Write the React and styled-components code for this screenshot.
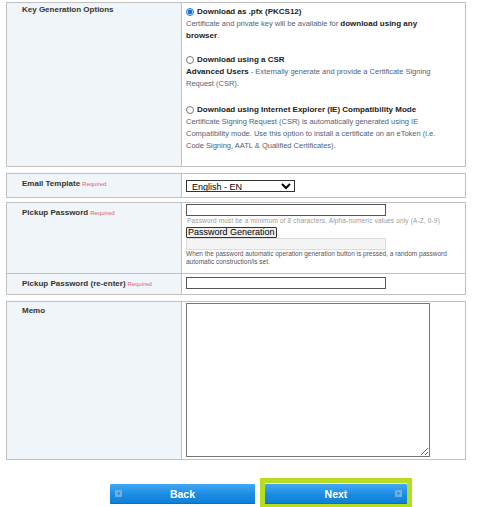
import React, { useState } from 'react'
import styled, { createGlobalStyle } from 'styled-components'

const GlobalStyle = createGlobalStyle`
    body {
        margin: 0;
        background: #fff;
        font-family: "Liberation Sans", Arial, sans-serif;
        color: #333;
    }
`

const Page = styled.div`
    width: 502px;
    height: 507px;
    overflow: hidden;
    padding: 2px 0 0 6px;
    box-sizing: border-box;
`

const Table = styled.div`
    width: 460px;
    box-sizing: border-box;
    border: 1px solid #c0c0c0;
    margin-bottom: ${props => props.gap ?? 6}px;
    display: grid;
    grid-template-columns: 175px 1fr;
`

const Label = styled.div`
    background: #eff5f8;
    border-right: 1px solid #c0c0c0;
    border-top: ${props => props.divider ? '1px solid #c0c0c0' : 'none'};
    padding: ${props => props.top ?? 4}px 0 0 15px;
    font-size: 8px;
    line-height: 9px;
    font-weight: bold;
    color: #333;
    height: ${props => props.h}px;
    box-sizing: border-box;
`

const Required = styled.span`
    font-size: 6px;
    font-weight: normal;
    color: #e0607a;
    margin-left: 2px;
`

const Value = styled.div`
    border-top: ${props => props.divider ? '1px solid #c0c0c0' : 'none'};
    padding: ${props => props.pad || '3px 0 0 4px'};
    box-sizing: border-box;
    height: ${props => props.h}px;
`

const Option = styled.div`
    max-width: 258px;
    margin-bottom: ${props => props.space ?? 12}px;
    font-size: 7.5px;
    line-height: 12px;
`

const OptionTitle = styled.label`
    display: flex;
    align-items: center;
    font-size: 8px;
    font-weight: bold;
    color: #222;
    input {
        width: 8px;
        height: 8px;
        margin: 0 3px 0 0;
        accent-color: #1a6fe0;
    }
`

const Desc = styled.div`
    color: #4f6378;
    b {
        color: #222;
        font-size: 8px;
    }
`

const Select = styled.select`
    width: 109px;
    height: 12px;
    font-family: "Liberation Sans", Arial, sans-serif;
    font-size: 9px;
    color: #000;
    border: 1px solid #333;
    border-radius: 0;
    padding: 0 0 0 1px;
    background: #fff;
    margin-top: 3px;
`

const TextInput = styled.input`
    display: block;
    width: 200px;
    height: 12px;
    box-sizing: border-box;
    border: 1px solid ${props => props.disabled ? '#dcdcdc' : '#555'};
    border-radius: 0;
    padding: 0;
    margin: 0;
    background: ${props => props.disabled ? '#f4f4f4' : '#fff'};
`

const Hint = styled.div`
    font-size: 6.5px;
    letter-spacing: 0.15px;
    color: #9a9a9a;
    line-height: 8px;
    margin: 1px 0 2px 1px;
    white-space: nowrap;
`

const GenButton = styled.button`
    display: block;
    font-family: "Liberation Sans", Arial, sans-serif;
    font-size: 9px;
    color: #000;
    background: #efefef;
    border: 1px solid #333;
    border-radius: 1px;
    padding: 0 1px;
    height: 11px;
    line-height: 9px;
`

const Note = styled.div`
    font-size: 6.5px;
    line-height: 8px;
    color: #555;
    max-width: 272px;
`

const Memo = styled.textarea`
    display: block;
    width: 244px;
    height: 154px;
    box-sizing: border-box;
    border: 1px solid #767676;
    border-radius: 0;
    margin: 0;
    resize: both;
`

const Buttons = styled.div`
    display: flex;
    align-items: flex-start;
    gap: 5px;
    padding: 18px 0 0 104px;
`

const Highlight = styled.div`
    border: 5px solid #b6dd1f;
    border-bottom-width: 4px;
    padding-top: 1px;
    background: #fff;
`

const NavButton = styled.button`
    position: relative;
    width: ${props => props.w}px;
    height: 20px;
    margin-top: ${props => props.offset || 0}px;
    border: none;
    border-radius: 1px;
    background: linear-gradient(#42a8f5, #1a8be0 55%, #0c7fd4);
    box-shadow: inset 0 -1px 0 #0a6fbc;
    color: #fff;
    font-family: "Liberation Sans", Arial, sans-serif;
    font-weight: bold;
    font-size: 10.5px;
    padding: 0;
    display: flex;
    align-items: center;
    justify-content: center;
`

const Arrow = styled.span`
    position: absolute;
    top: 6px;
    ${props => props.side}: 5px;
    width: 7px;
    height: 7px;
    background: #6bb3e6;
    border-radius: 1px;
    display: flex;
    align-items: center;
    justify-content: center;
`

const App = () => {
    const [mode, setMode] = useState('pfx')
    const [lang, setLang] = useState('en')

    return (
        <Page>
            <GlobalStyle />
            <Table gap={6}>
                <Label h={163} top={2}>Key Generation Options</Label>
                <Value h={163} pad="3px 0 0 4px">
                    <Option>
                        <OptionTitle>
                            <input type="radio" name="mode" checked={mode === 'pfx'} onChange={() => setMode('pfx')} />
                            Download as .pfx (PKCS12)
                        </OptionTitle>
                        <Desc>Certificate and private key will be available for <b>download using any browser</b>.</Desc>
                    </Option>
                    <Option space={14}>
                        <OptionTitle>
                            <input type="radio" name="mode" checked={mode === 'csr'} onChange={() => setMode('csr')} />
                            Download using a CSR
                        </OptionTitle>
                        <Desc><b>Advanced Users</b> - Externally generate and provide a Certificate Signing Request (CSR).</Desc>
                    </Option>
                    <Option space={0}>
                        <OptionTitle>
                            <input type="radio" name="mode" checked={mode === 'ie'} onChange={() => setMode('ie')} />
                            Download using Internet Explorer (IE) Compatibility Mode
                        </OptionTitle>
                        <Desc>Certificate Signing Request (CSR) is automatically generated using IE Compatibility mode. Use this option to install a certificate on an eToken (i.e. Code Signing, AATL &amp; Qualified Certificates).</Desc>
                    </Option>
                </Value>
            </Table>

            <Table gap={4}>
                <Label h={23} top={5}>Email Template<Required>Required</Required></Label>
                <Value h={23} pad="2px 0 0 4px">
                    <Select value={lang} onChange={(e) => setLang(e.target.value)}>
                        <option value="en">English - EN</option>
                        <option value="ja">日本語 - JA</option>
                    </Select>
                </Value>
            </Table>

            <Table gap={6}>
                <Label h={70} top={5}>Pickup Password<Required>Required</Required></Label>
                <Value h={70} pad="1px 0 0 4px">
                    <TextInput type="password" />
                    <Hint>Password must be a minimum of 8 characters. Alpha-numeric values only (A-Z, 0-9)</Hint>
                    <GenButton type="button">Password Generation</GenButton>
                    <TextInput disabled />
                    <Note>When the password automatic operation generation button is pressed, a random password automatic construction/is set.</Note>
                </Value>
                <Label h={21} top={5} divider>Pickup Password (re-enter)<Required>Required</Required></Label>
                <Value h={21} pad="3px 0 0 4px" divider>
                    <TextInput type="password" />
                </Value>
            </Table>

            <Table gap={0}>
                <Label h={157} top={4}>Memo</Label>
                <Value h={157} pad="1px 0 0 4px">
                    <Memo />
                </Value>
            </Table>

            <Buttons>
                <NavButton w={145} offset={6} type="button">
                    <Arrow side="left">
                        <svg width="5" height="5" viewBox="0 0 5 5"><path d="M3.5 0.5 L1 2.5 L3.5 4.5 Z" fill="#2f86cc" /></svg>
                    </Arrow>
                    Back
                </NavButton>
                <Highlight>
                    <NavButton w={142} type="button">
                        Next
                        <Arrow side="right">
                            <svg width="5" height="5" viewBox="0 0 5 5"><path d="M1.5 0.5 L4 2.5 L1.5 4.5 Z" fill="#2f86cc" /></svg>
                        </Arrow>
                    </NavButton>
                </Highlight>
            </Buttons>
        </Page>
    )
}

export default App
